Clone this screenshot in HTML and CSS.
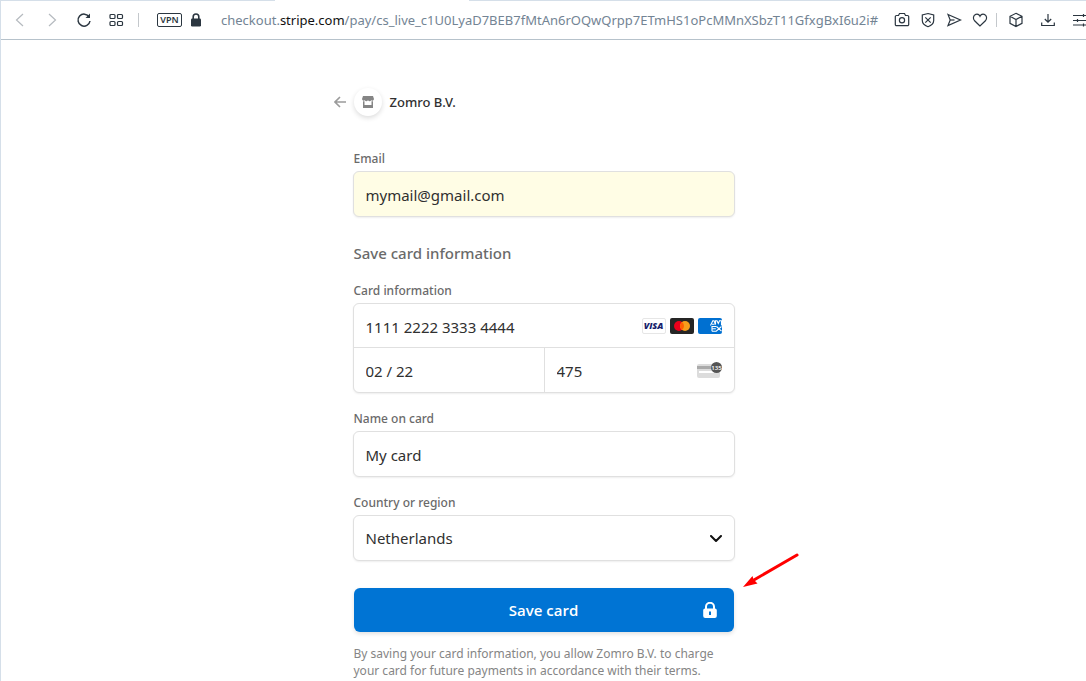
FILE: index.html
```html
<!DOCTYPE html>
<html lang="en">
<head>
<meta charset="utf-8">
<meta name="viewport" content="width=device-width, initial-scale=1">
<title>Save card</title>
<link rel="stylesheet" href="styles.css">
</head>
<body>
<div class="window">
  <div class="tab-edge"><span class="active-tab"></span></div>
  <header class="toolbar">
    <nav class="nav-tools" aria-label="Navigation">
      <button class="tool faint" aria-label="Back"><svg width="16" height="16" viewBox="0 0 16 16"><path d="M11 2 4.500 8 11 14"/></svg></button>
      <button class="tool faint" aria-label="Forward"><svg width="16" height="16" viewBox="0 0 16 16"><path d="M5 2 11.500 8 5 14"/></svg></button>
      <button class="tool" aria-label="Reload"><svg width="16" height="16" viewBox="0 0 16 16"><path d="M13.200 5A6 6 0 1 0 14 9" stroke-width="1.500"/><path d="M14 1.500V6H9.500Z" fill="currentColor" stroke="none"/></svg></button>
      <button class="tool" aria-label="Speed dial"><svg width="16" height="16" viewBox="0 0 16 16"><rect x="2" y="2.500" width="5" height="4" rx="1"/><rect x="9.500" y="2.500" width="5" height="4" rx="1"/><rect x="2" y="9.500" width="5" height="4" rx="1"/><rect x="9.500" y="9.500" width="5" height="4" rx="1"/></svg></button>
    </nav>
    <span class="rule"></span>
    <button class="vpn">VPN</button>
    <svg class="site-lock" width="12" height="14" viewBox="0 0 12 14"><rect x="1" y="5.500" width="10" height="8" rx="1.200" fill="currentColor"/><path d="M3.200 6V3.800a2.800 2.800 0 0 1 5.600 0V6" fill="none" stroke="currentColor" stroke-width="1.600"/></svg>
    <div class="address">checkout.<b>stripe.com</b>/pay/cs_live_c1U0LyaD7BEB7fMtAn6rOQwQrpp7ETmHS1oPcMMnXSbzT11GfxgBxI6u2i#</div>
    <div class="page-tools">
      <button class="tool" aria-label="Snapshot"><svg width="16" height="16" viewBox="0 0 16 16"><path d="M2.500 3.500H4.500L5.500 1.500H10.500L11.500 3.500H13.500A1.200 1.200 0 0 1 14.700 4.700V12.500A1.200 1.200 0 0 1 13.500 13.700H2.500A1.200 1.200 0 0 1 1.300 12.500V4.700A1.200 1.200 0 0 1 2.500 3.500Z"/><circle cx="8" cy="8.300" r="2.600"/></svg></button>
      <button class="tool" aria-label="Ad blocker"><svg width="16" height="16" viewBox="0 0 16 16"><path d="M8 1.500 13.700 3V8.500C13.700 11.500 11 13.600 8 14.700 5 13.600 2.300 11.500 2.300 8.500V3Z"/><path d="M5.300 5.300 10.700 10.700M10.700 5.300 5.300 10.700"/></svg></button>
      <button class="tool" aria-label="My Flow"><svg width="16" height="16" viewBox="0 0 16 16"><path d="M2 2.500 14.500 8 2 13.500 4.200 8Z"/><path d="M4.200 8H8.500"/></svg></button>
      <button class="tool" aria-label="Bookmark"><svg width="16" height="16" viewBox="0 0 16 16"><path d="M8 14 2.600 8.800C.6 6.600 1.200 3.300 3.800 2.400 5.500 1.900 7.200 2.700 8 4.300 8.800 2.700 10.500 1.900 12.200 2.400 14.800 3.300 15.400 6.600 13.400 8.800Z"/></svg></button>
    </div>
    <span class="rule"></span>
    <div class="browser-tools">
      <button class="tool" aria-label="Extensions"><svg width="16" height="16" viewBox="0 0 16 16"><path d="M8 1.300 14 4.300V11.300L8 14.500 2 11.300V4.300ZM2 4.300 8 7.500 14 4.300M8 7.500V14.500"/></svg></button>
      <button class="tool" aria-label="Downloads"><svg width="16" height="16" viewBox="0 0 16 16"><path d="M8 2V10M4.800 7 8 10.200 11.200 7M1.700 10.500V13.500H14.300V10.500"/></svg></button>
      <button class="tool" aria-label="Easy setup"><svg width="16" height="16" viewBox="0 0 16 16"><path d="M1 3.500H16M1 8.500H16M1 13H16M11.500 2V5M5.500 7V10M11.500 11.500V14.500"/></svg></button>
    </div>
  </header>

  <main class="checkout">
    <header class="merchant">
      <a class="back" href="#" aria-label="Back"><svg width="12" height="12" viewBox="0 0 12 12"><path d="M12 6H1M6 1 1 6 6 11" fill="none" stroke="currentColor" stroke-width="1.600"/></svg></a>
      <span class="shop"><svg width="12" height="12" viewBox="0 0 12 12"><path d="M1 0H11L12 3A1.700 1.700 0 0 1 9.300 4.300 2.200 2.200 0 0 1 6 4.300 2.200 2.200 0 0 1 2.700 4.300 1.700 1.700 0 0 1 0 3ZM1 5.300H2.500V9H9.500V5.300H11V12H1Z" fill="currentColor"/></svg></span>
      <h1 class="merchant-name">Zomro B.V.</h1>
    </header>

    <form class="form">
      <div class="field">
        <label for="email">Email</label>
        <input class="box autofilled" id="email" type="email" value="mymail@gmail.com">
      </div>
      <h2 class="section-title">Save card information</h2>
      <div class="field">
        <label for="number">Card information</label>
        <div class="card-group">
          <div class="cell number">
            <input id="number" type="text" value="1111 2222 3333 4444">
            <span class="brands">
              <span class="visa">VISA</span>
              <svg width="24" height="16" viewBox="0 0 24 16"><rect width="24" height="16" rx="2" fill="#252525"/><circle cx="9" cy="8" r="5" fill="#eb001b"/><circle cx="15" cy="8" r="5" fill="#f79e1b"/><path d="M12 4a5 5 0 0 1 0 8 5 5 0 0 1 0-8Z" fill="#ff5f00"/></svg>
              <svg width="24" height="16" viewBox="0 0 24 16"><rect width="24" height="16" rx="2" fill="#0070d1"/><path d="M12.500 7.500 14.800 2.800H16L17.500 6.500V2.800H19L20.300 5.500 21.500 2.800H23.500V7.500M14 6.200H16.500M14 13.200V8.500H18.200M14 10.800H17.800M14 13.200H18.200L23.500 8.500M18.500 8.500 23.500 13.200" fill="none" stroke="#fff" stroke-width="1.100"/></svg>
            </span>
          </div>
          <div class="cell"><input type="text" value="02 / 22" aria-label="Expiration"></div>
          <div class="cell cvc">
            <input type="text" value="475" aria-label="CVC">
            <svg class="cvc-icon" width="25" height="18" viewBox="0 0 25 18" role="img" aria-label="Security code"><rect y="3" width="23" height="14" rx="2" fill="#dcdcdc"/><rect y="5" width="23" height="3" fill="#aaa"/><rect x="2" y="10" width="17" height="2" fill="#fff"/><circle cx="19.500" cy="6.500" r="5.500" fill="#555"/><text x="19.500" y="9" text-anchor="middle" class="cvc-digits">135</text></svg>
          </div>
        </div>
      </div>
      <div class="field">
        <label for="name">Name on card</label>
        <input class="box" id="name" type="text" value="My card">
      </div>
      <div class="field">
        <label for="country">Country or region</label>
        <div class="select-wrap">
          <select class="box" id="country"><option>Netherlands</option></select>
          <svg class="chevron" width="12" height="8" viewBox="0 0 12 8"><path d="M1 1 6 6 11 1" fill="none" stroke="#111" stroke-width="2" stroke-linecap="round" stroke-linejoin="round"/></svg>
        </div>
      </div>
      <div class="submit-row">
        <button class="submit" type="button">
          <span>Save card</span>
          <svg class="submit-lock" width="14" height="16" viewBox="0 0 14 16"><path d="M3 7V4.800a4 4 0 0 1 8 0V7" fill="none" stroke="#fff" stroke-width="2"/><path fill="#fff" fill-rule="evenodd" d="M2 6.500H12A1.800 1.800 0 0 1 13.800 8.300V14A2 2 0 0 1 11.800 16H2.200A2 2 0 0 1 .2 14V8.300A1.800 1.800 0 0 1 2 6.500ZM6 9.500V13H8V9.500Z"/></svg>
        </button>
        <svg class="pointer" width="58" height="38" viewBox="0 0 58 38"><path d="M55 3 11 28.500" stroke="#f00" stroke-width="3" stroke-linecap="round"/><path d="M1 35 10.500 24 11.500 27.500 15.500 31.500Z" fill="#f00"/></svg>
      </div>
      <p class="terms">By saving your card information, you allow Zomro B.V. to charge your card for future payments in accordance with their terms.</p>
    </form>
  </main>
</div>
</body>
</html>
```
FILE: styles.css
```css
* {
  box-sizing: border-box;
}

body {
  margin: 0;
  background: #fff;
  color: #303030;
  font-family: "Noto Sans", "Open Sans", sans-serif;
  overflow: hidden;
}

button,
input,
select {
  font: inherit;
  color: inherit;
}

.window {
  min-height: 100vh;
  border-left: 1px solid #d5dfe9;
}

.tab-edge {
  height: 1px;
  background: #d5dfe9;
  padding-left: 274px;
}

.active-tab {
  display: block;
  width: 194px;
  height: 1px;
  background: #fff;
}

.toolbar {
  display: flex;
  align-items: center;
  height: 39px;
  padding-left: 11px;
  border-bottom: 1px solid #b6c2cb;
  color: #2b3640;
  overflow: hidden;
}

.nav-tools,
.page-tools,
.browser-tools {
  display: flex;
  flex: none;
}

.nav-tools {
  gap: 16px;
}

.page-tools {
  gap: 10px;
  margin-left: 12px;
}

.browser-tools {
  gap: 16px;
  margin-left: 11px;
  margin-right: -2px;
}

.tool {
  display: block;
  width: 16px;
  height: 16px;
  padding: 0;
  border: 0;
  background: none;
}

.tool svg {
  display: block;
  fill: none;
  stroke: currentColor;
  stroke-width: 1.2;
}

.faint {
  color: #b5babf;
}

.rule {
  flex: none;
  width: 1px;
  height: 14px;
  margin-left: 14px;
  background: #c4c8cc;
}

.page-tools + .rule {
  margin-left: 8px;
}

.vpn {
  flex: none;
  width: 25px;
  height: 14px;
  margin-left: 18px;
  padding: 0;
  border: 1px solid #2b3640;
  border-radius: 2px;
  background: none;
  font-size: 9px;
  font-weight: 600;
  line-height: 12px;
}

.site-lock {
  flex: none;
  margin-left: 8px;
}

.address {
  flex: 1;
  min-width: 0;
  margin-left: 19px;
  overflow: hidden;
  white-space: nowrap;
  font-size: 13px;
  line-height: 20px;
  color: #738494;
}

.address b {
  font-weight: 400;
  color: #111;
}

.checkout {
  width: 100%;
  max-width: 382px;
  margin: 0 auto;
  padding-top: 48px;
}

.merchant {
  display: flex;
  align-items: center;
  height: 28px;
  margin-bottom: 35px;
  margin-left: -19px;
}

.back {
  display: flex;
  color: #9b9b9b;
}

.shop {
  display: flex;
  align-items: center;
  justify-content: center;
  width: 28px;
  height: 28px;
  margin-left: 8px;
  border-radius: 50%;
  color: #858585;
  box-shadow: 0 2px 5px rgba(0, 0, 0, 0.14);
}

.merchant-name {
  margin: 0 0 0 8px;
  font-size: 13px;
  font-weight: 500;
  line-height: 20px;
}

.form {
  display: flex;
  flex-direction: column;
  gap: 18px;
}

.field {
  display: flex;
  flex-direction: column;
  gap: 4px;
}

.field label {
  padding-left: 1px;
  font-size: 12px;
  font-weight: 500;
  line-height: 16px;
  color: #6a6a6a;
}

.box,
.card-group {
  width: 100%;
  border: 1px solid #e0e0e0;
  border-radius: 6px;
  background: #fff;
  box-shadow: 0 1px 2px rgba(0, 0, 0, 0.07);
}

.box {
  height: 46px;
  padding: 2px 12px 0;
  font-size: 15px;
}

.autofilled {
  background: #fffde5;
}

.section-title {
  margin: 8px 0 2px;
  padding-left: 1px;
  font-size: 15px;
  font-weight: 500;
  line-height: 20px;
  color: #6a6a6a;
}

.card-group {
  display: grid;
  grid-template-columns: 1fr 1fr;
}

.cell {
  display: flex;
  align-items: center;
  height: 44px;
  padding: 0 12px;
}

.cell input {
  flex: 1;
  min-width: 0;
  width: 100%;
  padding: 2px 0 0;
  border: 0;
  background: none;
  font-size: 15px;
}

.number {
  grid-column: 1 / -1;
  border-bottom: 1px solid #e0e0e0;
}

.cvc {
  border-left: 1px solid #e0e0e0;
}

.brands {
  display: flex;
  gap: 4px;
}

.visa {
  width: 24px;
  height: 16px;
  border: 1px solid #e6e6e6;
  border-radius: 2px;
  color: #171e6c;
  font-family: "Open Sans", sans-serif;
  font-size: 9px;
  font-style: italic;
  font-weight: 800;
  line-height: 14px;
  text-align: center;
}

.cvc-digits {
  font-size: 6px;
  font-weight: 600;
  fill: #fff;
}

.select-wrap,
.submit-row {
  position: relative;
}

.select-wrap .box {
  display: block;
  padding-top: 0;
  appearance: none;
}

.chevron {
  position: absolute;
  top: 20px;
  right: 13px;
  pointer-events: none;
}

.submit-row {
  margin: 9px 1px 0;
}

.submit {
  position: relative;
  display: block;
  width: 100%;
  height: 44px;
  border: 0;
  border-radius: 6px;
  background: #0074d4;
  color: #fff;
  font-family: "Open Sans", sans-serif;
  font-size: 15px;
  font-weight: 600;
  box-shadow: 0 2px 4px rgba(0, 0, 0, 0.12);
}

.submit-lock {
  position: absolute;
  top: 14px;
  right: 17px;
}

.pointer {
  position: absolute;
  right: -66px;
  bottom: 42px;
  fill: none;
}

.terms {
  margin: -5px 0 0;
  padding-left: 1px;
  font-size: 12px;
  line-height: 17px;
  color: #858585;
}
```
